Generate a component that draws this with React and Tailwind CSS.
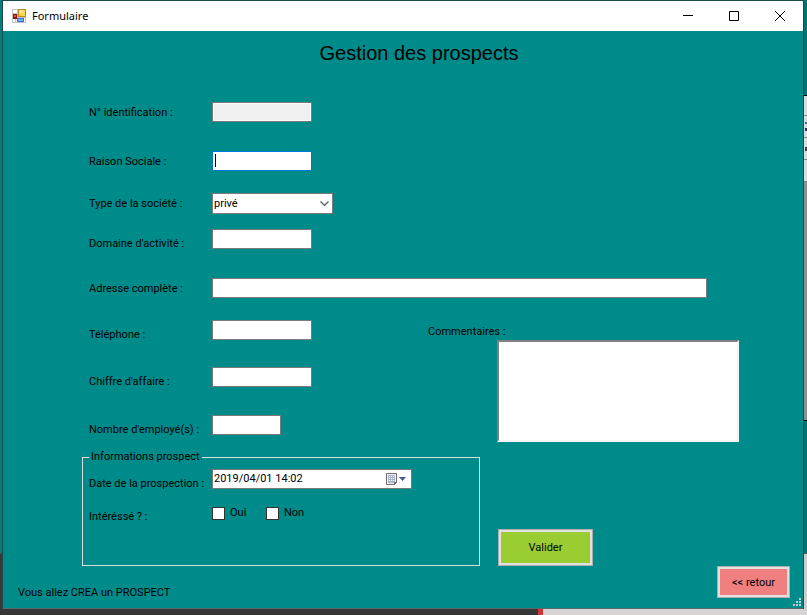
import React from "react";

const fieldBox =
  "h-5 border border-[#7a7a7a] bg-white px-px text-[11px] leading-4 text-black outline-none";

function Row({ id, label, low = false, className = "", children }) {
  return (
    <div className={`flex items-start ${className}`}>
      <label htmlFor={id} className={`w-[123px] shrink-0 whitespace-nowrap leading-5 ${low ? "pt-[5px]" : "pt-px"}`}>
        {label}
      </label>
      {children}
    </div>
  );
}

function AppIcon() {
  return (
    <svg width="14" height="14" viewBox="0 0 14 14" shapeRendering="crispEdges" aria-hidden="true">
      <rect width="14" height="14" fill="#c3c3c3" />
      <path d="M1 1h4v3H1zM1 10h2v3H1zM4 10h1v3H4zM12 9h1v4h-1z" fill="#fff" />
      <rect x="1" y="5" width="4" height="5" fill="#8c1515" />
      <rect x="2" y="6" width="2" height="2" fill="#dd4b45" />
      <rect x="6" y="0" width="8" height="8" fill="#b98a17" />
      <rect x="7" y="1" width="6" height="6" fill="#ffd34e" />
      <rect x="7" y="1" width="4" height="3" fill="#ffe78f" />
      <rect x="5" y="9" width="7" height="4" fill="#3c6fd1" />
      <rect x="6" y="10" width="5" height="2" fill="#7db0f8" />
    </svg>
  );
}

function CaptionButton({ label, children }) {
  return (
    <button type="button" aria-label={label} className="flex h-[29px] w-[46px] items-center justify-center">
      <svg width="12" height="12" viewBox="0 0 12 12" fill="none" stroke="#000" aria-hidden="true">
        {children}
      </svg>
    </button>
  );
}

function TitleBar() {
  return (
    <header className="flex h-[30px] items-start justify-between bg-white">
      <div className="flex h-[30px] items-center gap-[6px] pl-[9px]">
        <AppIcon />
        <span className="font-['Noto_Sans','Open_Sans',sans-serif] text-[11px] leading-4 text-black">Formulaire</span>
      </div>
      <div className="flex">
        <CaptionButton label="Réduire">
          <path d="M1 5.5h10" />
        </CaptionButton>
        <CaptionButton label="Agrandir">
          <path d="M1.5 1.5h9v9h-9z" />
        </CaptionButton>
        <CaptionButton label="Fermer">
          <path d="M1 1l10 10M11 1L1 11" />
        </CaptionButton>
      </div>
    </header>
  );
}

function CalendarIcon() {
  return (
    <svg width="20" height="13" viewBox="0 0 20 13" aria-hidden="true">
      <path d="M0.5 0.5h10v9l-2 2h-8z" fill="#f4f4f6" stroke="#75696b" />
      <path d="M2 2h7v8H2z" fill="#aab6cc" />
      <path d="M3 3h1v1H3zM5 3h1v1H5zM7 3h1v1H7zM3 5h1v1H3zM5 5h1v1H5zM7 5h1v1H7zM3 7h1v1H3zM5 7h1v1H5zM7 7h1v1H7z" fill="#fff" />
      <path d="M8 12v-3h3z" fill="#6f6a72" />
      <path d="M13 4h7l-3.500 4z" fill="#3f5c94" />
    </svg>
  );
}

function Grip() {
  return (
    <svg
      className="absolute right-[2px] bottom-[2px]"
      width="8"
      height="8"
      viewBox="0 0 8 8"
      fill="#bfcfcf"
      shapeRendering="crispEdges"
      aria-hidden="true"
    >
      <path d="M6 0h2v2H6zM3 3h2v2H3zM6 3h2v2H6zM0 6h2v2H0zM3 6h2v2H3zM6 6h2v2H6z" />
    </svg>
  );
}

function ProspectForm() {
  return (
    <form className="relative flex flex-1 flex-col bg-[#008b8b] pt-2" onSubmit={(e) => e.preventDefault()}>
      <h1 className="pl-8 text-center font-['Liberation_Sans',Arial,sans-serif] text-[20px] leading-7">
        Gestion des prospects
      </h1>

      <div className="mt-[35px] pl-[86px]">
        <Row id="ident" label="N° identification :">
          <input
            id="ident"
            readOnly
            className="h-5 w-[100px] border border-[#7a7a7a] bg-[#f0f0f0] shadow-[inset_0_0_0_1px_#fff] outline-none"
          />
        </Row>
        <Row id="raison" label="Raison Sociale :" className="mt-7">
          <div className="relative flex">
            <input
              id="raison"
              className="h-5 w-[100px] border border-[#0078d7] bg-white px-px text-[11px] outline-none"
            />
            <span className="absolute top-[3px] left-[3px] h-[13px] w-px bg-black" />
          </div>
        </Row>
        <Row id="type" label="Type de la société :" className="mt-[21px]">
          <div className="relative flex">
            <select
              id="type"
              className="h-[21px] w-[121px] appearance-none border border-[#7a7a7a] bg-white pl-px text-[11px] leading-4 text-black outline-none"
            >
              <option>privé</option>
              <option>public</option>
            </select>
            <svg
              className="pointer-events-none absolute top-2 right-1"
              width="9"
              height="6"
              viewBox="0 0 9 6"
              fill="none"
              stroke="#555"
              strokeWidth="1.2"
              aria-hidden="true"
            >
              <path d="M0.500 0.500l4 4 4-4" />
            </svg>
          </div>
        </Row>
        <Row id="domaine" label="Domaine d'activité :" low className="mt-[15px]">
          <input id="domaine" className={`${fieldBox} w-[100px]`} />
        </Row>
        <Row id="adresse" label="Adresse complète :" className="mt-6 pr-24">
          <input id="adresse" className={`${fieldBox} min-w-0 flex-1`} />
        </Row>
      </div>

      <div className="mt-[21px] flex pr-16 pl-[86px]">
        <div className="w-[339px] shrink-0">
          <Row id="tel" label="Téléphone :" low>
            <input id="tel" className={`${fieldBox} w-[100px]`} />
          </Row>
          <Row id="chiffre" label="Chiffre d'affaire :" low className="mt-[22px]">
            <input id="chiffre" className={`${fieldBox} w-[100px]`} />
          </Row>
          <Row id="nombre" label="Nombre d'employé(s) :" low className="mt-[23px]">
            <input id="nombre" className={`${fieldBox} w-[69px]`} />
          </Row>
        </div>
        <div className="flex min-w-0 flex-1 flex-col">
          <label htmlFor="comm" className="pt-1 leading-4">
            Commentaires :
          </label>
          <textarea
            id="comm"
            className="ml-[69px] h-[102px] resize-none border-2 border-t-[#808080] border-r-[#f4f4f4] border-b-[#f4f4f4] border-l-[#808080] bg-white text-[11px] outline-none"
          />
        </div>
      </div>

      <div className="mt-2 flex items-end gap-[18px] pl-[79px]">
        <fieldset className="h-[116px] w-[398px] shrink-0 border border-[#dcdcdc] px-[6px]">
          <legend className="px-[2px] leading-[14px]">Informations prospect</legend>
          <Row id="date" label="Date de la prospection :" low className="mt-[5px]">
            <div className="flex h-5 w-[200px] items-center border border-[#7a7a7a] bg-white pr-[5px]">
              <input
                id="date"
                defaultValue="2019/04/01 14:02"
                className="min-w-0 flex-1 px-px text-[11px] leading-4 text-black outline-none"
              />
              <button type="button" aria-label="Ouvrir le calendrier">
                <CalendarIcon />
              </button>
            </div>
          </Row>
          <div className="mt-2 flex items-start" role="group" aria-labelledby="interet">
            <span id="interet" className="w-[123px] shrink-0 pt-[5px] leading-5">
              Intéréssé ? :
            </span>
            <label className="flex w-[54px] items-center gap-[5px] leading-[22px]">
              <input type="checkbox" className="size-[13px] appearance-none border border-[#333] bg-white checked:bg-[#333]" />
              Oui
            </label>
            <label className="flex items-center gap-[5px] leading-[22px]">
              <input type="checkbox" className="size-[13px] appearance-none border border-[#333] bg-white checked:bg-[#333]" />
              Non
            </label>
          </div>
        </fieldset>
        <button
          type="submit"
          className="h-[37px] w-[95px] border border-[#adadad] bg-[#9acd32] pt-[2px] text-[11px] shadow-[inset_0_0_0_2px_#e1e1e1]"
        >
          Valider
        </button>
      </div>

      <footer className="flex items-start justify-between pr-[13px] pl-[15px]">
        <p className="pt-[17px] leading-5">Vous allez CREA un PROSPECT</p>
        <button
          type="button"
          className="h-8 w-[73px] border border-[#adadad] bg-[#f08080] pt-[2px] text-[11px] shadow-[inset_0_0_0_2px_#e1e1e1]"
        >
          &lt;&lt; retour
        </button>
      </footer>
      <Grip />
    </form>
  );
}

function DesktopRight() {
  return (
    <div className="flex w-1 shrink-0 flex-col border-l border-[#174f4f] bg-[#007272]" aria-hidden="true">
      <div className="h-[95px]" />
      <div className="flex h-[87px] flex-col border-t border-black bg-[#dedcdc]">
        <div className="h-5 border-b border-[#8a8a8a]" />
        <div className="flex h-[22px] flex-col items-end justify-center gap-1 border-b border-[#8a8a8a]">
          <div className="h-[2px] w-[2px] bg-[#3a6a88]" />
          <div className="h-[3px] w-[2px] bg-[#3a2a50]" />
        </div>
        <div className="flex h-[22px] flex-col items-end justify-center border-b border-[#8a8a8a]">
          <div className="h-[4px] w-[2px] bg-[#4a3a50]" />
        </div>
        <div className="h-[22px] border-b border-[#8a8a8a]" />
      </div>
      <div className="h-[239px] border-b border-black bg-[#918f8f]" />
      <div className="h-[133px] border-b border-[#4b5f5f]" />
      <div className="flex-1 bg-[#cfcdcd]" />
    </div>
  );
}

export default function App() {
  return (
    <div className="flex min-h-screen flex-col bg-[#007272] font-[Roboto,'Liberation_Sans',sans-serif] text-[11px] text-black">
      <div className="flex flex-1">
        <div className="flex w-[3px] shrink-0 flex-col border-r border-[#204848]">
          <div className="h-[554px] border-b border-[#4a4a4a] bg-[#007d7d]" />
          <div className="flex-1 bg-[#383838]" />
        </div>
        <div className="flex min-w-0 flex-1 flex-col border-t border-b border-t-[#174f4f] border-b-[#5b6b6b]">
          <TitleBar />
          <ProspectForm />
        </div>
        <DesktopRight />
      </div>
      <div className="flex h-[6px]">
        <div className="w-2/3 bg-[#363636]" />
        <div className="w-[5px] bg-[#d03338]" />
        <div className="flex-1 bg-[#d6d4d4]" />
      </div>
    </div>
  );
}
